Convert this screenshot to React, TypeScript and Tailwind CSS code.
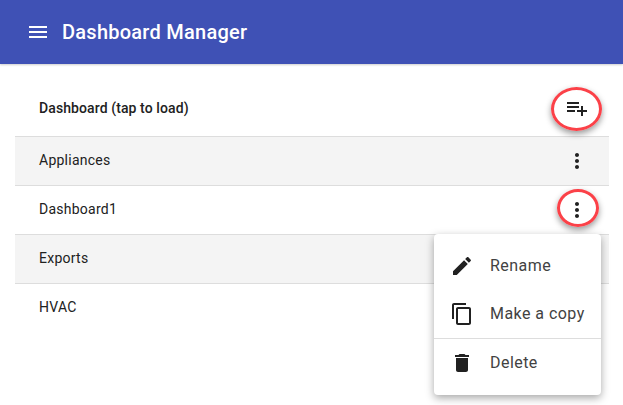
const rows = [
  { name: "Appliances", shaded: true, menu: true },
  { name: "Dashboard1", shaded: false, menu: true },
  { name: "Exports", shaded: true, menu: false },
  { name: "HVAC", shaded: false, menu: false },
];

function Icon({ d, className }: { d: string; className?: string }) {
  return (
    <svg viewBox="0 0 24 24" className={className} fill="currentColor">
      <path d={d} />
    </svg>
  );
}

const moreVert =
  "M12 8c1.1 0 2-.9 2-2s-.9-2-2-2-2 .9-2 2 .9 2 2 2zm0 2c-1.1 0-2 .9-2 2s.9 2 2 2 2-.9 2-2-.9-2-2-2zm0 6c-1.1 0-2 .9-2 2s.9 2 2 2 2-.9 2-2-.9-2-2-2z";

export default function App() {
  return (
    <div
      className="relative w-[623px] h-[405px] overflow-hidden bg-white text-[#212121]"
      style={{ fontFamily: "Roboto, sans-serif" }}
    >
      {/* app bar */}
      <header className="flex items-center h-[64px] bg-[#3f51b5] text-white pl-[26px] shadow-[0_1px_2px_rgba(0,0,0,0.2)]">
        <Icon
          className="w-6 h-6"
          d="M3 18h18v-2H3v2zm0-5h18v-2H3v2zm0-7v2h18V6H3z"
        />
        <h1 className="ml-[12px] text-[20px] font-medium tracking-[0.25px]">
          Dashboard Manager
        </h1>
      </header>

      {/* list */}
      <div className="mx-[15px] w-[594px]">
        <div className="flex items-center justify-between h-[73px] pt-[16px] pl-[24px] pr-[20px] border-b border-[#dddddd]">
          <span className="text-[14px] font-medium tracking-[0.1px]">
            Dashboard (tap to load)
          </span>
          <Icon
            className="w-6 h-6"
            d="M14 10H2v2h12v-2zm0-4H2v2h12V6zm4 8v-4h-2v4h-4v2h4v4h2v-4h4v-2h-4zM2 16h8v-2H2v2z"
          />
        </div>
        {rows.map((row) => (
          <div
            key={row.name}
            className={
              row.shaded
                ? "flex items-center justify-between h-[49px] pl-[24px] pr-[20px] bg-[#f4f4f4] border-b border-[#dddddd]"
                : row.menu
                  ? "flex items-center justify-between h-[49px] pl-[24px] pr-[20px] border-b border-[#dddddd]"
                  : "flex items-center justify-between h-[49px] pl-[24px] pr-[20px]"
            }
          >
            <span className="text-[14px] tracking-[0.25px] pb-[2px]">{row.name}</span>
            {row.menu && <Icon className="w-6 h-6" d={moreVert} />}
          </div>
        ))}
      </div>

      {/* annotation rings */}
      <div className="absolute left-[551px] top-[87px] w-[51px] h-[44px] rounded-[50%] border-[3px] border-[#fb4148] shadow-[0_3px_6px_rgba(0,0,0,0.4)]" />
      <div className="absolute left-[557px] top-[189px] w-[42px] h-[38px] rounded-[50%] border-[3px] border-[#fb4148] shadow-[0_3px_6px_rgba(0,0,0,0.4)]" />

      {/* popup menu */}
      <div className="absolute left-[434px] top-[234px] w-[167px] h-[161px] bg-white rounded-[4px] shadow-[0_3px_8px_rgba(0,0,0,0.35)] pt-[8px] text-[#424242]">
        <div className="flex items-center h-[48px] pl-[16px]">
          <Icon
            className="w-6 h-6 text-[#212121]"
            d="M3 17.25V21h3.75L17.81 9.94l-3.75-3.75L3 17.25zM20.71 7.04c.39-.39.39-1.02 0-1.41l-2.34-2.34c-.39-.39-1.02-.39-1.41 0l-1.83 1.83 3.75 3.75 1.83-1.83z"
          />
          <span className="ml-[16px] text-[16px] tracking-[0.45px]">Rename</span>
        </div>
        <div className="flex items-center h-[48px] pl-[16px]">
          <Icon
            className="w-6 h-6 text-[#212121]"
            d="M16 1H4c-1.1 0-2 .9-2 2v14h2V3h12V1zm3 4H8c-1.1 0-2 .9-2 2v14c0 1.1.9 2 2 2h11c1.1 0 2-.9 2-2V7c0-1.1-.9-2-2-2zm0 16H8V7h11v14z"
          />
          <span className="ml-[16px] text-[16px] tracking-[0.45px]">Make a copy</span>
        </div>
        <div className="border-t border-[#dddddd]" />
        <div className="flex items-center h-[48px] pl-[16px]">
          <Icon
            className="w-6 h-6 text-[#212121]"
            d="M6 19c0 1.1.9 2 2 2h8c1.1 0 2-.9 2-2V7H6v12zM19 4h-3.5l-1-1h-5l-1 1H5v2h14V4z"
          />
          <span className="ml-[16px] text-[16px] tracking-[0.45px]">Delete</span>
        </div>
      </div>
    </div>
  );
}
